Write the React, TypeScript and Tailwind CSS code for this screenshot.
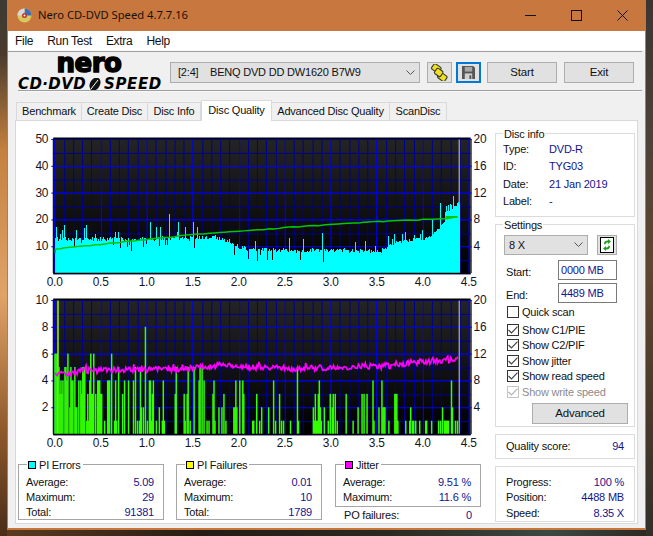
import React from "react";

// small seeded random so the traces stay the same on every load
function rng(seed: number) {
  let s = seed;
  return () => {
    s = (s * 1664525 + 1013904223) % 4294967296;
    return s / 4294967296;
  };
}

function lerp(pts: number[][], x: number) {
  for (let i = 1; i < pts.length; i++) {
    if (x <= pts[i][0]) {
      const [x0, y0] = pts[i - 1];
      const [x1, y1] = pts[i];
      return y0 + ((y1 - y0) * (x - x0)) / (x1 - x0);
    }
  }
  return pts[pts.length - 1][1];
}

const xOf = (v: number) => 52.4 + 92.6 * v;
const XL = 51;
const XR = 471;
const xTicks = ["0.0", "0.5", "1.0", "1.5", "2.0", "2.5", "3.0", "3.5", "4.0", "4.5"];

function Grid({ top, step, id }: { top: number; step: number; id: string }) {
  const bottom = top + step * 10;
  const lines = [];
  for (let i = 0; i <= 45; i++) {
    const x = Math.round(xOf(i / 10));
    lines.push(
      <line key={"v" + i} x1={x + 0.5} x2={x + 0.5} y1={top} y2={bottom} stroke={i % 5 === 0 ? "#0000f0" : "#000090"} strokeWidth={i % 5 === 0 ? 1.2 : 1} />
    );
  }
  for (let i = 0; i <= 10; i++) {
    const y = Math.round(top + step * i);
    lines.push(
      <line key={"h" + i} x1={XL} x2={XR} y1={y + 0.5} y2={y + 0.5} stroke={i % 2 === 0 ? "#0000f0" : "#000090"} strokeWidth={i % 2 === 0 ? 1.2 : 1} />
    );
  }
  return (
    <>
      <defs>
        <linearGradient id={id} x1="0" x2="0" y1="0" y2="1">
          <stop offset="0" stopColor="#242424" />
          <stop offset="1" stopColor="#000000" />
        </linearGradient>
      </defs>
      <rect x={XL} y={top} width={XR - XL} height={bottom - top} fill={`url(#${id})`} />
      {lines}
    </>
  );
}

function Axes({ top, step, left, right }: { top: number; step: number; left: string[]; right: string[] }) {
  const bottom = top + step * 10;
  return (
    <>
      <line x1={XL} x2={XR} y1={top - 0.5} y2={top - 0.5} stroke="#000" strokeWidth={2} />
      <line x1={XL} x2={XR} y1={bottom + 0.5} y2={bottom + 0.5} stroke="#000" strokeWidth={1.5} />
      <line x1={XR + 0.5} x2={XR + 0.5} y1={top} y2={bottom} stroke="#000" />
      {left.map((t, i) => (
        <g key={t}>
          <line x1={49} x2={52} y1={top + step * 2 * i + 0.5} y2={top + step * 2 * i + 0.5} stroke="#0000f0" />
          <text x={46} y={top + step * 2 * i + 4} textAnchor="end" fontSize={12} fill="#15151f">{t}</text>
        </g>
      ))}
      {right.map((t, i) => (
        <g key={t}>
          <line x1={XR - 2} x2={XR + 1} y1={top + step * 2 * i + 0.5} y2={top + step * 2 * i + 0.5} stroke="#0000f0" />
          <text x={474} y={top + step * 2 * i + 4} fontSize={12} fill="#15151f">{t}</text>
        </g>
      ))}
      <line x1={XL} x2={XL} y1={top} y2={bottom} stroke="#000" />
      {xTicks.map((t, i) => (
        <text key={t} x={xOf(i * 0.5)} y={bottom + 13} textAnchor="middle" fontSize={12} fill="#15151f">{t}</text>
      ))}
    </>
  );
}

// spikes read off the reference: [px, top y]
const cyanSpikes: Record<number, number> = {
  52: 226, 54: 228, 58: 235, 60: 231, 62: 226, 74: 231, 82: 229, 84: 226, 148: 223, 154: 228, 158: 228,
  167: 215, 177: 223, 184: 228, 192: 223, 196: 228, 254: 242, 288: 239, 302: 240, 321: 234, 365: 242,
  388: 237, 405: 233, 422: 231, 432: 220, 440: 203, 446: 206, 453: 196, 458: 202,
};

function Chart1() {
  const r = rng(7);
  const env = [[53, 240], [150, 240], [215, 238], [232, 246], [250, 251], [380, 252], [395, 243], [425, 240], [436, 232], [444, 222], [448, 205], [459, 204]];
  const bars = [];
  for (let x = 53; x < 460; x++) {
    let y = lerp(env, x) + (r() - 0.5) * 4;
    if (r() < 0.06) y += 3 + r() * 7;
    if (r() < 0.05) y -= 3 + r() * 4;
    if (cyanSpikes[x]) y = cyanSpikes[x];
    bars.push(<rect key={x} x={x} y={Math.round(y)} width={1} height={274 - Math.round(y)} fill="#00ffff" shapeRendering="crispEdges" />);
  }
  const line = [[53, 249.5], [145, 240], [192, 235], [250, 231], [284, 228], [330, 225], [376, 222], [422, 220], [458, 218]];
  const gr = [];
  for (let x = 53; x <= 457; x += 5) {
    gr.push(`${x},${(lerp(line, x) + (r() < 0.3 ? 0.5 : 0)).toFixed(1)}`);
  }
  return (
    <svg width={475} height={158} viewBox="15 132 475 158" className="block">
      <Grid top={139} step={13.5} id="g1" />
      <line x1={459.5} x2={459.5} y1={139} y2={274} stroke="#d0d0d0" />
      {bars}
      <polyline points={"53,254 53,249.5 " + gr.join(" ")} fill="none" stroke="#00c800" strokeWidth={1.5} />
      <rect x={446} y={216.5} width={12} height={2} fill="#00c800" />
      <Axes top={139} step={13.5} left={["50", "40", "30", "20", "10"]} right={["20", "16", "12", "8", "4"]} />
    </svg>
  );
}

// PIF bars read off the reference: [zoomed x, height in units]
const pifLeft = [
  [155, 6], [158, 6], [161, 6], [165, 10], [168, 5], [172, 3], [175, 4], [178, 3], [181, 4], [185, 5], [188, 5], [191, 4], [196, 6], [200, 2], [205, 5], [208, 4], [211, 4], [217, 5], [220, 2], [223, 2], [228, 4], [235, 4], [238, 3], [241, 5], [244, 5], [247, 5], [252, 1], [256, 3], [259, 1], [262, 4], [265, 6], [268, 3], [271, 3], [274, 6], [280, 3], [285, 4], [288, 4], [291, 4], [294, 3], [298, 3], [306, 1], [316, 4], [319, 4], [322, 4], [328, 6], [335, 1], [338, 4], [341, 1], [348, 5], [360, 3], [366, 4], [378, 4], [392, 4], [400, 5], [405, 1], [412, 1], [415, 5], [418, 2], [424, 2], [430, 8], [435, 1], [440, 4], [443, 4], [446, 1], [450, 3], [453, 4], [462, 1], [470, 2], [481, 1], [484, 4], [487, 1], [518, 3], [522, 5], [545, 3], [548, 1], [555, 3], [558, 5], [565, 1], [577, 5], [590, 4], [594, 5], [600, 5], [605, 4], [615, 1], [622, 1], [632, 3], [635, 4], [640, 1], [652, 2], [660, 2], [666, 3], [672, 1], [695, 2], [698, 2], [701, 4], [704, 2], [713, 4], [722, 4], [725, 3],
];
const pifRight = [
  [2, 1], [5, 1], [15, 3], [25, 1], [30, 2], [50, 2], [67, 4], [72, 1], [85, 3], [90, 1], [95, 1], [118, 1], [138, 5], [142, 1], [185, 2], [188, 1], [191, 1], [193, 3], [196, 1], [199, 1], [202, 3], [205, 4], [208, 2], [211, 1], [220, 2], [232, 1], [236, 3], [242, 2], [247, 3], [253, 3], [259, 1], [286, 3], [307, 1], [320, 2], [334, 3], [340, 3], [349, 3], [367, 4], [370, 1], [385, 2], [394, 4], [397, 2], [400, 2], [403, 2], [415, 1], [432, 3], [435, 3], [438, 3], [442, 1], [466, 1], [476, 1], [481, 2], [486, 1], [490, 1], [494, 1], [506, 1], [524, 1], [528, 1], [544, 1], [565, 1], [570, 1], [577, 2], [582, 1], [585, 1], [588, 1], [591, 1], [594, 1], [604, 4], [607, 2], [615, 1], [620, 1],
];

function Chart2() {
  const r = rng(23);
  const base = [[53, 376], [70, 375], [80, 372], [100, 372], [150, 371], [190, 370], [220, 367], [250, 369], [300, 370], [370, 368], [395, 367], [410, 364], [457, 361]];
  const pts = [];
  for (let x = 53; x <= 458; x += 1) {
    pts.push(`${x},${(lerp(base, x) + (r() - 0.5) * 6 - (r() < 0.04 ? 3 : 0)).toFixed(1)}`);
  }
  const pif = [
    ...pifLeft.map(([x, h]) => [Math.round(x / 3), h]),
    ...pifRight.map(([x, h]) => [250 + Math.round(x / 3), h]),
  ];
  return (
    <svg width={475} height={160} viewBox="15 292 475 160" className="mt-[2px] block">
      <Grid top={301} step={13.5} id="g2" />
      <line x1={459.5} x2={459.5} y1={301} y2={436} stroke="#d0d0d0" />
      {pif.map(([x, h], i) => (
        <rect key={i} x={x} y={436 - h * 13.5} width={1.5} height={h * 13.5} fill={h === 10 ? "#a0f020" : "#33ff00"} />
      ))}
      <polyline points={pts.join(" ")} fill="none" stroke="#ff00ff" strokeWidth={1.6} />
      <Axes top={301} step={13.5} left={["10", "8", "6", "4", "2"]} right={["20", "16", "12", "8", "4"]} />
    </svg>
  );
}

function Chevron() {
  return (
    <svg width="9" height="6" viewBox="0 0 9 6" fill="none" stroke="#555" strokeWidth="1">
      <path d="M0.5 0.5 L4.5 4.5 L8.5 0.5" />
    </svg>
  );
}

function Value({ children }: { children: React.ReactNode }) {
  return <span className="text-[#14148c]">{children}</span>;
}

function StatRow({ label, value }: { label: string; value: string }) {
  return (
    <div className="flex h-[15px] items-center justify-between leading-[15px]">
      <span>{label}</span>
      <Value>{value}</Value>
    </div>
  );
}

function StatBox({ title, swatch, className, children }: { title: string; swatch: string; className: string; children: React.ReactNode }) {
  return (
    <div className={"relative w-[146px] border border-[#a6a6a6] pt-[10px] pr-[9px] pl-[7px] " + className}>
      <div className="absolute -top-[7px] left-[8px] flex h-[14px] items-center gap-[3px] bg-white px-[1px] leading-[14px]">
        <span className={"h-[8px] w-[8px] border border-black " + swatch} />
        <span className="pr-[1px]">{title}</span>
      </div>
      {children}
    </div>
  );
}

function Check({ label, checked = true, muted = false }: { label: string; checked?: boolean; muted?: boolean }) {
  return (
    <div className={"flex h-[15.5px] items-center gap-[3px] pl-[11px] " + (muted ? "text-[#8c8c8c]" : "")}>
      <span className={"flex h-[12px] w-[12px] items-center justify-center border " + (muted ? "border-[#c4c4c4]" : "border-[#333]")}>
        {checked && (
          <svg width="10" height="8" viewBox="0 0 10 8" fill="none" stroke={muted ? "#b4b4b4" : "#444"} strokeWidth="1.2">
            <path d="M0.5 4 L3.5 7 L9.5 0.7" />
          </svg>
        )}
      </span>
      <span>{label}</span>
    </div>
  );
}

function Group({ title, className, children }: { title?: string; className: string; children: React.ReactNode }) {
  return (
    <div className={"relative border border-[#dcdcdc] " + className}>
      {title && <div className="absolute -top-[7px] left-[7px] h-[14px] bg-white px-[1px] leading-[14px]">{title}</div>}
      {children}
    </div>
  );
}

const tabs = [
  { name: "Benchmark", w: "w-[66px]" },
  { name: "Create Disc", w: "w-[66px]" },
  { name: "Disc Info", w: "w-[53px]" },
  { name: "Disc Quality", w: "w-[71px]", active: true },
  { name: "Advanced Disc Quality", w: "w-[118px]" },
  { name: "ScanDisc", w: "w-[57px]" },
];

const btn = "flex h-[21px] items-center justify-center border border-[#adadad] bg-[#e1e1e1]";

export default function App() {
  return (
    <div className="flex h-[536px] w-[653px] overflow-hidden text-[11px] tracking-[-0.2px] text-[#111] [font-family:'Liberation_Sans',sans-serif]">
      {/* desktop wallpaper showing around the window */}
      <div className="w-[7px] bg-[linear-gradient(180deg,#3c3a34_0%,#4a3a2c_10%,#c4813f_28%,#e0a468_55%,#8f5a2c_80%,#4a2c18_100%)]" />
      <div className="flex w-[639px] flex-col">
        <div className="flex h-[530px] flex-col border-x border-b-2 border-[#c8763c] bg-[#f0f0f0]">
          {/* title bar */}
          <div className="flex h-[31px] items-center bg-[#c8783f] pl-[9px] text-[11.2px] tracking-normal text-[#1a1008]">
            <svg width="15" height="15" viewBox="0 0 15 15" className="mr-[6px]">
              <circle cx="7.5" cy="7.5" r="7" fill="#d8c860" />
              <path d="M7.5 .5 A7 7 0 0 1 14.5 7.5 L7.5 7.5 Z" fill="#3a6fc0" />
              <path d="M.5 7.5 A7 7 0 0 1 7.5 .5 L7.5 7.5 Z" fill="#d8d8d8" />
              <circle cx="7.5" cy="7.5" r="2.5" fill="#c03020" />
              <circle cx="7.5" cy="7.5" r="1" fill="#fff" />
            </svg>
            <span className="[font-family:'Noto_Sans',sans-serif]">Nero CD-DVD Speed 4.7.7.16</span>
            <div className="ml-auto flex h-full items-center">
              <div className="flex h-full w-[46px] items-center justify-center">
                <svg width="11" height="11" viewBox="0 0 11 11" stroke="#111"><path d="M0 5.5H11" /></svg>
              </div>
              <div className="flex h-full w-[46px] items-center justify-center">
                <svg width="11" height="11" viewBox="0 0 11 11" fill="none" stroke="#111"><rect x=".5" y=".5" width="10" height="10" /></svg>
              </div>
              <div className="flex h-full w-[46px] items-center justify-center">
                <svg width="11" height="11" viewBox="0 0 11 11" stroke="#111"><path d="M.5 .5L10.5 10.5M10.5 .5L.5 10.5" /></svg>
              </div>
            </div>
          </div>

          {/* menu */}
          <div className="flex h-[19px] items-center gap-[14px] bg-white pl-[7px] text-[12px] tracking-[-0.3px]">
            <span>File</span>
            <span>Run Test</span>
            <span>Extra</span>
            <span>Help</span>
          </div>
          <div className="mr-[3px] h-[2px] border-b border-[#a0a0a0] bg-[#f8f8f8]" />

          {/* toolbar */}
          <div className="flex h-[38px] items-start">
            <div className="h-full w-[162px] text-black [font-family:'DejaVu_Sans',sans-serif]">
              <div className="mt-[1px] h-[20px] text-center text-[26px] leading-[20px] font-bold tracking-[-0.5px] [-webkit-text-stroke:1.5px_black]">nero</div>
              <div className="mt-[5px] flex h-[12px] items-center pl-[10px] text-[15px] leading-[12px] font-bold tracking-[0.4px] italic">
                <span>CD·DVD</span>
                <svg width="16" height="12" viewBox="0 0 16 12" className="mx-[1px] shrink-0">
                  <ellipse cx="8" cy="6" rx="5" ry="7" transform="rotate(30 8 6)" fill="#111" />
                  <path d="M4 11 L11 2" stroke="#fff" strokeWidth="1" />
                </svg>
                <span className="tracking-[0.6px]">SPEED</span>
              </div>
            </div>
            <div className="flex items-center pt-[10px]">
              <div className={btn + " w-[250px] !justify-start pl-[7px]"}>
                <span className="w-[32px]">[2:4]</span>
                <span>BENQ DVD DD DW1620 B7W9</span>
                <span className="ml-auto pr-[4px]"><Chevron /></span>
              </div>
              <div className={btn + " ml-[7px] w-[25px]"}>
                <svg width="17" height="17" viewBox="0 0 16 16">
                  <g fill="#f0e020" stroke="#333" strokeWidth="1">
                    <rect x="1" y="1" width="8" height="6" rx="1.5" transform="rotate(35 5 4)" />
                    <rect x="7" y="9" width="8" height="6" rx="1.5" transform="rotate(35 10.5 11.5)" />
                    <rect x="4" y="5" width="7" height="6" rx="1.5" transform="rotate(35 7.5 7.5)" />
                  </g>
                </svg>
              </div>
              <div className="ml-[4px] flex h-[21px] w-[25px] items-center justify-center border-2 border-[#0078d7] bg-[#e1e1e1]">
                <svg width="13" height="13" viewBox="0 0 14 14">
                  <path d="M0 0H12L14 2V14H0Z" fill="#555" />
                  <rect x="3" y="1" width="8" height="5" fill="#a8a8a8" />
                  <rect x="3" y="8" width="8" height="6" fill="#d0d0d0" />
                  <rect x="8" y="10" width="2" height="4" fill="#555" />
                </svg>
              </div>
              <div className={btn + " ml-[6px] w-[70px] text-[11.5px]"}>Start</div>
              <div className={btn + " ml-[7px] w-[70px] text-[11.5px]"}>Exit</div>
            </div>
          </div>
          <div className="mr-[3px] ml-[10px] h-[2px] border-t border-[#a0a0a0] bg-[#f8f8f8]" />

          {/* tabs */}
          <div className="flex h-[28px] items-end pl-[8px]">
            {tabs.map((t) =>
              t.active ? (
                <div key={t.name} className={"relative z-10 -mb-px flex h-[21px] items-center justify-center border border-b-0 border-[#d9d9d9] bg-white pb-[2px] " + t.w}>
                  {t.name}
                </div>
              ) : (
                <div key={t.name} className={"flex h-[18px] items-center justify-center border border-b-0 border-l-0 border-[#d9d9d9] bg-[#f0f0f0] first:border-l " + t.w}>
                  {t.name}
                </div>
              )
            )}
          </div>

          {/* tab panel */}
          <div className="mx-[7px] mb-[4px] flex h-[404px] border border-[#d9d9d9] bg-white">
            <div className="flex w-[479px] flex-col pt-[11px]">
              <Chart1 />
              <Chart2 />
              <div className="mt-[14px] flex pl-[2px]">
                <StatBox title="PI Errors" swatch="bg-[#00ffff]" className="h-[56px]">
                  <StatRow label="Average:" value="5.09" />
                  <StatRow label="Maximum:" value="29" />
                  <StatRow label="Total:" value="91381" />
                </StatBox>
                <StatBox title="PI Failures" swatch="bg-[#ffff00]" className="ml-[12px] h-[56px]">
                  <StatRow label="Average:" value="0.01" />
                  <StatRow label="Maximum:" value="10" />
                  <StatRow label="Total:" value="1789" />
                </StatBox>
                <div className="ml-[13px] w-[146px]">
                  <StatBox title="Jitter" swatch="bg-[#ff00ff]" className="h-[43px]">
                    <StatRow label="Average:" value="9.51 %" />
                    <StatRow label="Maximum:" value="11.6 %" />
                  </StatBox>
                  <div className="mt-[1px] flex h-[15px] items-center justify-between px-[9px]">
                    <span>PO failures:</span>
                    <Value>0</Value>
                  </div>
                </div>
              </div>
            </div>

            {/* right column */}
            <div className="flex w-[140px] flex-col gap-[7px] pt-[12px]">
              <Group title="Disc info" className="h-[84px] pt-[6px] pl-[7px]">
                {[
                  ["Type:", "DVD-R"],
                  ["ID:", "TYG03"],
                  ["Date:", "21 Jan 2019"],
                  ["Label:", "-"],
                ].map(([k, v]) => (
                  <div key={k} className="flex h-[17.5px] items-center">
                    <span className="w-[46px]">{k}</span>
                    <Value>{v}</Value>
                  </div>
                ))}
              </Group>

              <Group title="Settings" className="h-[203px] pt-[10px]">
                <div className="flex pl-[8px]">
                  <div className={btn + " !h-[20px] w-[84px] !justify-between px-[4px]"}>
                    <span>8 X</span>
                    <Chevron />
                  </div>
                  <div className={btn + " ml-[9px] !h-[20px] w-[20px]"}>
                    <svg width="14" height="16" viewBox="0 0 14 16">
                      <rect x=".5" y=".5" width="13" height="15" fill="#fff" stroke="#000" />
                      <path d="M4 7 C4 4 6 3.5 8 3.5 L8 2 L11 4.5 L8 7 L8 5.5 C6.5 5.5 5.5 6 5.5 7.5 Z" fill="#20a020" />
                      <path d="M10 9 C10 12 8 12.5 6 12.5 L6 14 L3 11.5 L6 9 L6 10.5 C7.5 10.5 8.5 10 8.5 8.5 Z" fill="#20a020" />
                    </svg>
                  </div>
                </div>
                <div className="mt-[5px] flex h-[20px] items-center pl-[10px]">
                  <span className="w-[52px] pt-[4px]">Start:</span>
                  <div className="flex h-[20px] w-[59px] items-center border border-[#7a7a7a] pl-[2px] text-[#14148c]">0000 MB</div>
                </div>
                <div className="mt-[3px] flex h-[20px] items-center pl-[10px]">
                  <span className="w-[52px] pt-[4px]">End:</span>
                  <div className="flex h-[20px] w-[59px] items-center border border-[#7a7a7a] pl-[2px] text-[#14148c]">4489 MB</div>
                </div>
                <div className="mt-[1px]">
                  <Check label="Quick scan" checked={false} />
                </div>
                <div className="mt-[2.5px]">
                  <Check label="Show C1/PIE" />
                  <Check label="Show C2/PIF" />
                  <Check label="Show jitter" />
                  <Check label="Show read speed" />
                  <Check label="Show write speed" muted />
                </div>
                <div className={btn + " mt-[3.5px] ml-[36px] w-[96px] text-[11.5px]"}>Advanced</div>
              </Group>

              <Group className="flex h-[25px] items-center justify-between px-[10px]">
                <span>Quality score:</span>
                <Value>94</Value>
              </Group>

              <Group className="h-[56px] px-[10px] pt-[7px]">
                {[
                  ["Progress:", "100 %"],
                  ["Position:", "4488 MB"],
                  ["Speed:", "8.35 X"],
                ].map(([k, v]) => (
                  <div key={k} className="flex h-[15.5px] items-center justify-between">
                    <span>{k}</span>
                    <Value>{v}</Value>
                  </div>
                ))}
              </Group>
            </div>
          </div>
        </div>
        <div className="flex-1 bg-[linear-gradient(90deg,#5a3a20_0%,#241c14_30%,#2a2a20_60%,#3a4a40_85%,#2c2a22_100%)]" />
      </div>
      <div className="flex-1 bg-[linear-gradient(180deg,#3a3632_0%,#4c4238_25%,#5f4630_50%,#4a3a2a_75%,#30302a_100%)]" />
    </div>
  );
}
